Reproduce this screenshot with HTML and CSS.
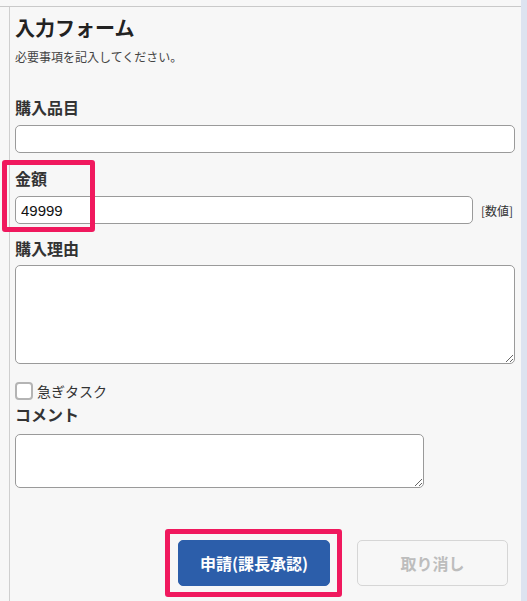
FILE: index.html
```html
<!DOCTYPE html>
<html lang="ja">
<head>
<meta charset="utf-8">
<link rel="stylesheet" href="styles.css">
</head>
<body>
<div class="page">
  <div class="main">
    <div class="gutter"></div>
    <form class="form">
      <h1 class="title">入力フォーム</h1>
      <p class="subtitle">必要事項を記入してください。</p>

      <label class="label label-first">購入品目</label>
      <input class="input" type="text">

      <div class="amount-block">
        <label class="label">金額</label>
        <div class="amount-row">
          <input class="input input-amount" type="text" value="49999">
          <span class="unit">[数値]</span>
        </div>
        <div class="mark mark-amount"></div>
      </div>

      <label class="label label-reason">購入理由</label>
      <textarea class="textarea textarea-reason"></textarea>

      <label class="check-row">
        <input class="checkbox" type="checkbox">
        <span class="check-text">急ぎタスク</span>
      </label>

      <label class="label label-comment">コメント</label>
      <textarea class="textarea textarea-comment"></textarea>

      <div class="buttons">
        <div class="btn-wrap">
          <button type="button" class="btn btn-primary">申請(課長承認)</button>
          <div class="mark mark-button"></div>
        </div>
        <button type="button" class="btn btn-secondary">取り消し</button>
      </div>
    </form>
  </div>
  <div class="side"></div>
</div>
</body>
</html>
```

FILE: styles.css
```css
* { box-sizing: border-box; }

html, body {
  margin: 0;
  padding: 0;
  background: #f7f7f7;
  font-family: "Noto Sans CJK JP", "Noto Sans", sans-serif;
  color: #333;
}

.page {
  display: flex;
  height: 601px;
  overflow: hidden;
}

.main {
  flex: 1;
  display: flex;
  margin-top: 6px;
  border-top: 1px solid #c9c9c9;
}

.gutter {
  width: 10px;
  border-right: 1px solid #cfcfcf;
  flex: none;
}

.side {
  width: 6px;
  flex: none;
  background: #dde3f0;
}

.form {
  flex: 1;
  display: flex;
  flex-direction: column;
  align-items: flex-start;
  padding: 7px 6px 0 5px;
}

.title {
  margin: 0;
  font-size: 20px;
  line-height: 28px;
  font-weight: bold;
  color: #222;
}

.subtitle {
  margin: 6px 0 0;
  font-size: 12px;
  line-height: 18px;
  color: #444;
}

.label {
  display: block;
  font-size: 16px;
  line-height: 24px;
  font-weight: bold;
  color: #333;
  margin: 13px 0 6px;
}

.label-first { margin-top: 29px; }
.label-reason { margin-top: 12px; }

.input {
  display: block;
  width: 100%;
  height: 28px;
  border: 1px solid #9a9a9a;
  border-radius: 5px;
  background: #fff;
  padding: 0 5px;
  font-family: "Liberation Sans", "Noto Sans", sans-serif;
  font-size: 15px;
  color: #111;
  outline: none;
}

.amount-block {
  position: relative;
  width: 100%;
}

.amount-row {
  display: flex;
  align-items: center;
  gap: 8px;
}

.input-amount {
  width: 458px;
  flex: none;
}

.unit {
  font-size: 12px;
  color: #333;
}

.textarea {
  display: block;
  border: 1px solid #9a9a9a;
  border-radius: 5px;
  background: #fff;
  margin: 0;
  outline: none;
}

.textarea-reason {
  width: 100%;
  height: 99px;
  margin-top: -1px;
}

.check-row {
  display: flex;
  align-items: center;
  gap: 4px;
  margin-top: 18px;
}

.checkbox {
  appearance: none;
  -webkit-appearance: none;
  width: 18px;
  height: 18px;
  margin: 0;
  border: 2px solid #b4b4b4;
  border-radius: 4px;
  background: #fff;
}

.check-text {
  font-size: 14px;
  line-height: 18px;
  color: #333;
}

.label-comment {
  margin: 2px 0 8px;
}

.textarea-comment {
  width: 409px;
  height: 54px;
}

.buttons {
  align-self: stretch;
  display: flex;
  justify-content: flex-end;
  gap: 27px;
  padding-right: 7px;
  margin-top: 52px;
}

.btn-wrap {
  position: relative;
}

.btn {
  display: block;
  width: 152px;
  height: 46px;
  border-radius: 5px;
  font-family: "Noto Sans CJK JP", "Noto Sans", sans-serif;
  font-size: 16px;
  font-weight: bold;
  cursor: pointer;
}

.btn-primary {
  background: #2c5eaa;
  border: 1px solid #2c5eaa;
  color: #fff;
}

.btn-secondary {
  width: 151px;
  background: #f7f7f7;
  border: 1px solid #d6d6d6;
  color: #bdbdbd;
}

.mark {
  position: absolute;
  border: 5px solid #f0195e;
  border-radius: 3px;
  pointer-events: none;
}

.mark-amount {
  left: -13px;
  top: 7px;
  width: 93px;
  height: 72px;
}

.mark-button {
  left: -13px;
  top: -11px;
  width: 177px;
  height: 68px;
}
```
